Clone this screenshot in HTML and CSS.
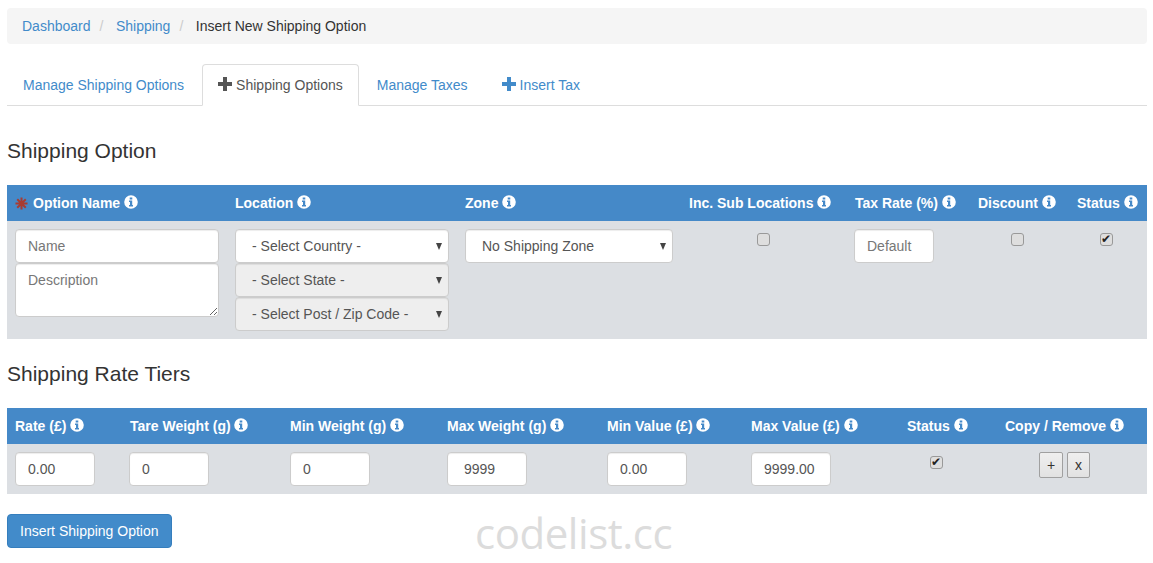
FILE: index.html
```html
<!DOCTYPE html>
<html lang="en">
<head>
  <meta charset="UTF-8">
  <meta name="viewport" content="width=device-width, initial-scale=1.0">
  <title>Insert New Shipping Option</title>
  <link rel="stylesheet" href="styles.css">
</head>
<body>
  <svg class="defs" width="0" height="0">
    <symbol id="info" viewBox="0 0 14 14">
      <path fill-rule="evenodd" d="M7 .2a6.8 6.8 0 1 1 0 13.6A6.8 6.8 0 0 1 7 .2zM5.7 2.4v2h2.6v-2zM5 5.6v1.3h1V10H5v1.4h4V10H8.2V5.6z"/>
    </symbol>
    <symbol id="plus" viewBox="0 0 14 14">
      <path d="M5 0h4v5h5v4H9v5H5V9H0V5h5z"/>
    </symbol>
    <symbol id="asterisk" viewBox="0 0 14 14">
      <path d="M7 .5v13M.5 7h13M2.4 2.4l9.2 9.2M11.6 2.4l-9.2 9.2" fill="none" stroke="currentColor" stroke-width="2.2"/>
    </symbol>
  </svg>

  <ol class="breadcrumb">
    <li><a href="#">Dashboard</a></li>
    <li><a href="#">Shipping</a></li>
    <li class="current">Insert New Shipping Option</li>
  </ol>

  <ul class="tabs">
    <li><a href="#">Manage Shipping Options</a></li>
    <li class="active"><a href="#"><svg class="tab-icon"><use href="#plus"/></svg>Shipping Options</a></li>
    <li><a href="#">Manage Taxes</a></li>
    <li><a href="#"><svg class="tab-icon"><use href="#plus"/></svg>Insert Tax</a></li>
  </ul>

  <h2 class="first">Shipping Option</h2>
  <table>
    <colgroup>
      <col class="w220"><col class="w230"><col class="w224"><col class="w166"><col class="w123"><col class="w99"><col class="w78">
    </colgroup>
    <tr>
      <th><svg class="required"><use href="#asterisk"/></svg>Option Name <svg class="info"><use href="#info"/></svg></th>
      <th>Location <svg class="info"><use href="#info"/></svg></th>
      <th>Zone <svg class="info"><use href="#info"/></svg></th>
      <th>Inc. Sub Locations <svg class="info"><use href="#info"/></svg></th>
      <th>Tax Rate (%) <svg class="info"><use href="#info"/></svg></th>
      <th>Discount <svg class="info"><use href="#info"/></svg></th>
      <th>Status <svg class="info"><use href="#info"/></svg></th>
    </tr>
    <tr>
      <td>
        <input type="text" class="field" placeholder="Name">
        <textarea class="field" placeholder="Description"></textarea>
      </td>
      <td>
        <div class="select-wrap"><select class="field"><option>- Select Country -</option></select></div>
        <div class="select-wrap"><select class="field" disabled><option>- Select State -</option></select></div>
        <div class="select-wrap"><select class="field" disabled><option>- Select Post / Zip Code -</option></select></div>
      </td>
      <td>
        <div class="select-wrap"><select class="field"><option>No Shipping Zone</option></select></div>
      </td>
      <td class="sub-check"><input type="checkbox" class="check"></td>
      <td class="nudge"><input type="text" class="field small" placeholder="Default"></td>
      <td class="discount-check"><input type="checkbox" class="check"></td>
      <td class="status-check"><input type="checkbox" class="check" checked></td>
    </tr>
  </table>

  <h2>Shipping Rate Tiers</h2>
  <table>
    <colgroup>
      <col class="w115"><col class="w160"><col class="w157"><col class="w160"><col class="w144"><col class="w156"><col class="w98"><col class="w150">
    </colgroup>
    <tr>
      <th>Rate (£) <svg class="info"><use href="#info"/></svg></th>
      <th>Tare Weight (g) <svg class="info"><use href="#info"/></svg></th>
      <th>Min Weight (g) <svg class="info"><use href="#info"/></svg></th>
      <th>Max Weight (g) <svg class="info"><use href="#info"/></svg></th>
      <th>Min Value (£) <svg class="info"><use href="#info"/></svg></th>
      <th>Max Value (£) <svg class="info"><use href="#info"/></svg></th>
      <th>Status <svg class="info"><use href="#info"/></svg></th>
      <th>Copy / Remove <svg class="info"><use href="#info"/></svg></th>
    </tr>
    <tr>
      <td><input type="text" class="field small" value="0.00"></td>
      <td class="nudge"><input type="text" class="field small" value="0"></td>
      <td><input type="text" class="field small" value="0"></td>
      <td><input type="text" class="field small inset" value="9999"></td>
      <td><input type="text" class="field small" value="0.00"></td>
      <td><input type="text" class="field small" value="9999.00"></td>
      <td class="tier-check"><input type="checkbox" class="check" checked></td>
      <td>
        <div class="tier-actions">
          <button class="mini">+</button>
          <button class="mini narrow">x</button>
        </div>
      </td>
    </tr>
  </table>

  <button class="submit">Insert Shipping Option</button>

  <div class="watermark">codelist.cc</div>
</body>
</html>
```

FILE: styles.css
```css
* {
  box-sizing: border-box;
}
body {
  margin: 0;
  padding: 8px 6px 0 7px;
  font-family: "Liberation Sans", Arial, sans-serif;
  font-size: 14px;
  line-height: 20px;
  color: #333;
  background: #fff;
}
a {
  color: #428bca;
  text-decoration: none;
}
.defs {
  position: absolute;
}

/* breadcrumb */
.breadcrumb {
  display: flex;
  margin: 0 0 20px;
  padding: 8px 15px;
  list-style: none;
  background: #f5f5f5;
  border-radius: 4px;
}
.breadcrumb li + li::before {
  content: "/";
  padding: 0 12.5px 0 9px;
  color: #ccc;
}

/* tabs */
.tabs {
  display: flex;
  gap: 2px;
  margin: 0;
  padding: 0;
  list-style: none;
  border-bottom: 1px solid #ddd;
}
.tabs li {
  margin-bottom: -1px;
}
.tabs a {
  display: block;
  padding: 10px 15px;
  border: 1px solid transparent;
  border-radius: 4px 4px 0 0;
}
.tabs .active a {
  color: #555;
  background: #fff;
  border-color: #ddd #ddd #fff;
}
.tab-icon {
  width: 14px;
  height: 14px;
  margin-right: 4px;
  vertical-align: -1px;
  fill: currentColor;
}

/* headings */
h2 {
  margin: 24px 0 23px;
  font-size: 21px;
  font-weight: 400;
  line-height: 22px;
}
h2.first {
  margin-top: 34px;
}

/* tables */
table {
  width: 100%;
  table-layout: fixed;
  border-collapse: collapse;
}
.w78 { width: 78px; }
.w98 { width: 98px; }
.w99 { width: 99px; }
.w115 { width: 115px; }
.w123 { width: 123px; }
.w144 { width: 144px; }
.w150 { width: 150px; }
.w156 { width: 156px; }
.w157 { width: 157px; }
.w160 { width: 160px; }
.w166 { width: 166px; }
.w220 { width: 220px; }
.w224 { width: 224px; }
.w230 { width: 230px; }
th {
  height: 36px;
  padding: 0 8px;
  color: #fff;
  font-weight: 700;
  text-align: left;
  white-space: nowrap;
  background: #4589c8;
}
td {
  padding: 8px;
  vertical-align: top;
  background: #dcdfe3;
}
td.nudge {
  padding-left: 7px;
}
.info {
  width: 14px;
  height: 14px;
  vertical-align: -1px;
  fill: #fff;
}
.required {
  width: 13px;
  height: 13px;
  margin-right: 5px;
  vertical-align: -2px;
  color: #a83c32;
}

/* form fields */
.field {
  display: block;
  width: 100%;
  height: 34px;
  padding: 6px 12px;
  font: inherit;
  color: #555;
  background: #fff;
  border: 1px solid #ccc;
  border-radius: 4px;
  box-shadow: inset 0 1px 1px rgba(0, 0, 0, .075);
}
.field::placeholder {
  color: #777;
  opacity: 1;
}
.small {
  width: 80px;
}
.inset {
  padding-left: 16px;
}
textarea.field {
  height: 54px;
  resize: vertical;
}
select.field {
  padding-left: 16px;
  appearance: none;
}
select.field:disabled {
  opacity: 1;
  color: #555;
  background: #eee;
}
.select-wrap {
  position: relative;
}
.select-wrap::after {
  content: "";
  position: absolute;
  top: 14px;
  right: 7px;
  border-top: 7px solid #444;
  border-left: 3px solid transparent;
  border-right: 3px solid transparent;
  pointer-events: none;
}

/* checkboxes */
.check {
  display: block;
  position: relative;
  width: 13px;
  height: 13px;
  margin: 4px 0 0;
  background: #dedede;
  border: 1px solid #999;
  border-radius: 3px;
  appearance: none;
}
.check:checked::after {
  content: "\2714";
  position: absolute;
  top: -1px;
  left: 0;
  font-size: 12px;
  line-height: 12px;
  color: #222;
}
.sub-check {
  padding-left: 76px;
}
.discount-check {
  padding-left: 41px;
}
.status-check {
  padding-left: 31px;
}
.tier-check {
  padding-left: 31px;
}
.tier-actions {
  display: flex;
  gap: 4px;
  padding-left: 34px;
}
.mini {
  width: 24px;
  height: 26px;
  padding: 0;
  font: inherit;
  color: #333;
  background: linear-gradient(#efefef, #e2e2e2);
  border: 1px solid #a0a0a0;
  border-radius: 2px;
}
.mini.narrow {
  width: 23px;
}

/* submit */
.submit {
  display: block;
  height: 34px;
  margin-top: 20px;
  padding: 6px 12px;
  font: inherit;
  color: #fff;
  background: #428bca;
  border: 1px solid #357ebd;
  border-radius: 4px;
}

/* watermark lies over the page */
.watermark {
  position: absolute;
  top: 505px;
  left: 475px;
  font-family: "Open Sans", sans-serif;
  font-size: 42px;
  letter-spacing: -.45px;
  line-height: 56px;
  color: #dcdcdc;
}
```
